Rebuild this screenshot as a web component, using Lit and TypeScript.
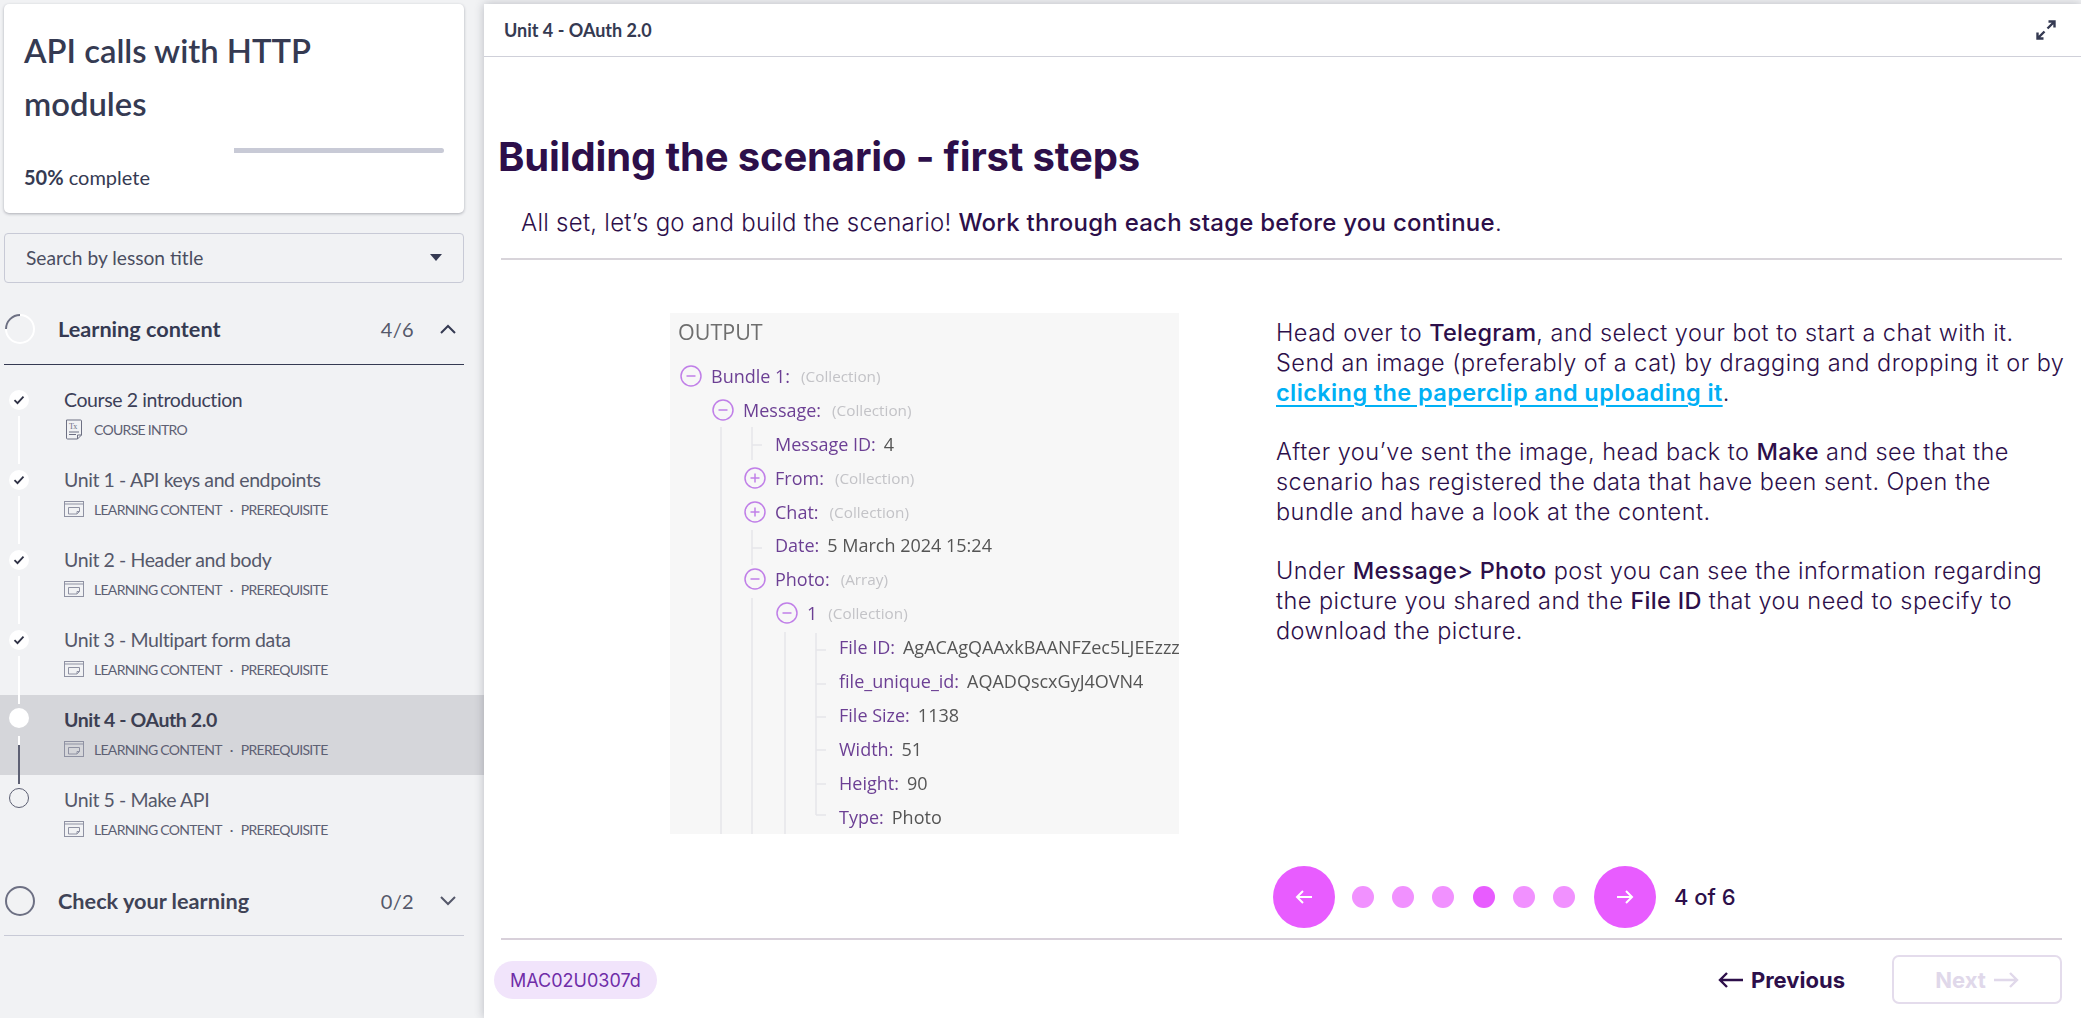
import { LitElement, css, html, svg } from 'lit';
import { customElement } from 'lit/decorators.js';

interface Lesson {
  title: string;
  meta: string[];
  state: 'done' | 'active' | 'todo';
  doc?: boolean;
}

interface TreeRow {
  depth: number;
  icon?: 'minus' | 'plus';
  label: string;
  type?: string;
  value?: string;
}

const lessons: Lesson[] = [
  { title: 'Course 2 introduction', meta: ['COURSE INTRO'], state: 'done', doc: true },
  { title: 'Unit 1 - API keys and endpoints', meta: ['LEARNING CONTENT', 'PREREQUISITE'], state: 'done' },
  { title: 'Unit 2 - Header and body', meta: ['LEARNING CONTENT', 'PREREQUISITE'], state: 'done' },
  { title: 'Unit 3 - Multipart form data', meta: ['LEARNING CONTENT', 'PREREQUISITE'], state: 'done' },
  { title: 'Unit 4 - OAuth 2.0', meta: ['LEARNING CONTENT', 'PREREQUISITE'], state: 'active' },
  { title: 'Unit 5 - Make API', meta: ['LEARNING CONTENT', 'PREREQUISITE'], state: 'todo' },
];

const tree: TreeRow[] = [
  { depth: 0, icon: 'minus', label: 'Bundle 1:', type: '(Collection)' },
  { depth: 1, icon: 'minus', label: 'Message:', type: '(Collection)' },
  { depth: 2, label: 'Message ID:', value: '4' },
  { depth: 2, icon: 'plus', label: 'From:', type: '(Collection)' },
  { depth: 2, icon: 'plus', label: 'Chat:', type: '(Collection)' },
  { depth: 2, label: 'Date:', value: '5 March 2024 15:24' },
  { depth: 2, icon: 'minus', label: 'Photo:', type: '(Array)' },
  { depth: 3, icon: 'minus', label: '1', type: '(Collection)' },
  { depth: 4, label: 'File ID:', value: 'AgACAgQAAxkBAANFZec5LJEEzzzz' },
  { depth: 4, label: 'file_unique_id:', value: 'AQADQscxGyJ4OVN4' },
  { depth: 4, label: 'File Size:', value: '1138' },
  { depth: 4, label: 'Width:', value: '51' },
  { depth: 4, label: 'Height:', value: '90' },
  { depth: 4, label: 'Type:', value: 'Photo' },
];

const slideIcon = html`<svg class="type-icon" width="20" height="16" viewBox="0 0 20 16" fill="none" stroke="#8f92a3" stroke-width="1">
  <rect x="0.5" y="0.5" width="19" height="15"/><path d="M0.5 3h19" />
  <path d="M4.5 6.5h11v4l-2.5 2.5h-8.5z"/><path d="M15.5 10.5h-2.5v2.5"/>
</svg>`;

const docIcon = html`<svg class="type-icon" width="20" height="21" viewBox="0 0 20 21" fill="none" stroke="#6d7083" stroke-width="1">
  <path d="M2.5 1h14a1 1 0 0 1 1 1v14l-4 4H3.5a1 1 0 0 1-1-1z"/><path d="M17.5 16h-4v4"/>
  <path d="M5 13h10M5 15.5h7"/>
  <text x="5" y="9.5" font-size="8" font-family="Liberation Serif, serif" fill="#6d7083" stroke="none">Tx</text>
</svg>`;

const check = html`<svg width="12" height="10" viewBox="0 0 12 10" fill="none" stroke="#2e3145" stroke-width="1.8"><path d="M1.5 5.2l3 3 6-6.6"/></svg>`;

@customElement('app-root')
export class AppRoot extends LitElement {
  static styles = css`
    :host {
      display: flex;
      height: 100vh;
      overflow: hidden;
      background: #f1f2f4;
      font-family: 'Lato', 'Noto Sans', sans-serif;
      color: #353a52;
    }

    /* sidebar */
    .side { width: 484px; flex: none; padding-top: 4px; }
    .card {
      margin: 0 20px 0 4px;
      height: 209px;
      box-sizing: border-box;
      padding: 20px 20px 0;
      background: #fff;
      border-radius: 5px;
      box-shadow: 0 1px 3px rgba(40, 44, 60, 0.35);
    }
    .card h2 { margin: 0; width: 330px; font-size: 32.8px; line-height: 53px; font-weight: 600; color: #353a52; }
    .bar { margin: 18px 0 0; height: 5px; display: flex; border-radius: 3px; overflow: hidden; }
    .bar i { flex: 1; background: #fff; }
    .bar b { flex: 1; background: #c8cad6; }
    .pct { margin-top: 11px; font-size: 20px; line-height: 26px; }
    .pct b { font-weight: 700; }
    .search {
      margin: 20px 20px 0 4px;
      height: 50px;
      box-sizing: border-box;
      padding: 0 21px 2px 21px;
      display: flex;
      align-items: center;
      justify-content: space-between;
      border: 1px solid #c8cad6;
      border-radius: 4px;
      font-size: 19.2px;
      color: #4a4d60;
    }
    .caret { width: 0; height: 0; border: 6px solid transparent; border-top: 7px solid #353a52; border-bottom: 0; }
    .section {
      margin: 0 20px 0 4px;
      height: 82px;
      padding-top: 11px;
      box-sizing: border-box;
      display: flex;
      align-items: center;
      border-bottom: 1px solid #353a52;
    }
    .section.closed { height: 81px; border-bottom-color: #c8cad6; }
    .section svg.ring { flex: none; margin: 0 23px 0 1px; }
    .section .name { flex: 1; font-size: 21.7px; font-weight: 700; color: #353a52; }
    .section.closed .name { color: #3f4356; }
    .section .count { font-size: 20px; letter-spacing: 0.3px; color: #55586a; margin-right: 26px; }
    .section svg.chev { flex: none; margin-right: 8px; }
    .lessons { padding-top: 10px; }
    .lesson { height: 80px; box-sizing: border-box; display: flex; padding: 15px 0 0 9px; }
    .lesson.active { background: #d5d6da; }
    .rail { width: 20px; margin-right: 35px; flex: none; }
    .node {
      width: 20px;
      height: 20px;
      box-sizing: border-box;
      border-radius: 50%;
      background: #fff;
      display: flex;
      align-items: center;
      justify-content: center;
    }
    .active .node { margin-top: -2px; }
    .todo .node { margin-top: -2px; background: transparent; border: 1px solid #5d6073; }
    .link { width: 2px; height: 48px; margin: 6px 0 0 9px; background: #fff; position: relative; z-index: 1; }
    .active .link { margin-top: 8px; background: linear-gradient(#fff 9px, #5d6073 9px); }
    .lesson .t { font-size: 19.5px; letter-spacing: -0.4px; line-height: 20px; color: #55586a; }
    .lesson.first .t { color: #3c4058; }
    .lesson.active .t { font-weight: 700; color: #3c3f52; }
    .lesson .m {
      margin-top: 9px;
      height: 20px;
      display: flex;
      align-items: center;
      font-size: 14px;
      letter-spacing: -0.7px;
      color: #5d6073;
    }
    .type-icon { flex: none; margin-right: 10px; }
    .m .dot { margin: 0 8px; }

    /* main */
    .main {
      flex: 1;
      min-width: 0;
      margin-top: 4px;
      background: #fff;
      display: flex;
      flex-direction: column;
      color: #2d0f4a;
      font-family: 'Inter', sans-serif;
      box-shadow: 0 0 9px rgba(40, 44, 60, 0.28);
      position: relative;
    }
    .top {
      height: 53px;
      flex: none;
      box-sizing: border-box;
      padding: 0 25px 0 20px;
      display: flex;
      align-items: center;
      justify-content: space-between;
      border-bottom: 1px solid #cfd0d9;
      font-family: 'Lato', sans-serif;
      font-size: 18px;
      font-weight: 700;
      color: #353a52;
    }
    .body { flex: 1; padding: 76px 19px 0 14px; display: flex; flex-direction: column; min-height: 0; }
    h1 { margin: 0; font-size: 40px; line-height: 48px; font-weight: 700; letter-spacing: -0.15px; color: #2d0f4a; }
    .intro {
      margin: 26px 0 0 3px;
      padding: 0 0 19px 20px;
      border-bottom: 2px solid #d8d4da;
      font-size: 24px;
      letter-spacing: 0.25px;
      line-height: 32px;
      font-weight: 300;
    }
    .intro b, .copy b { font-weight: 500; }
    .split { display: flex; margin-top: 53px; height: 521px; flex: none; }
    .shot {
      margin-left: 172px;
      width: 509px;
      height: 521px;
      flex: none;
      background: #f7f7f7;
      position: relative;
      overflow: hidden;
      font-family: 'Open Sans', sans-serif;
      filter: blur(0.45px);
    }
    .shot .h { padding: 5px 0 0 8px; font-size: 21.5px; line-height: 28px; color: #6e6e6e; }
    .rows { padding-top: 13px; }
    .row {
      height: 33.9px;
      display: flex;
      align-items: center;
      white-space: nowrap;
      font-size: 18px;
    }
    .row svg { flex: none; margin-right: 9px; }
    .row .l { color: #6c3f94; margin-right: 8px; }
    .row .ty { color: #c3c3c7; font-size: 15.3px; margin-left: 3px; }
    .row .v { color: #555; }
    .guides { position: absolute; left: 0; top: 0; }
    .copy { margin-left: 97px; width: 790px; flex: none; font-size: 23.5px; letter-spacing: 0.47px; line-height: 30px; font-weight: 300; margin-top: 5px; }
    .copy p { margin: 0 0 29px; }
    .copy b { letter-spacing: 0.3px; }
    .copy a { color: #00b0f5; font-weight: 600; letter-spacing: 0.4px; text-decoration: underline; text-underline-offset: 4px; }
    .pager { margin: 32px 0 0 775px; display: flex; align-items: center; height: 62px; flex: none; }
    .round {
      width: 62px;
      height: 62px;
      border-radius: 50%;
      background: #e85cff;
      display: flex;
      align-items: center;
      justify-content: center;
      flex: none;
    }
    .dots { display: flex; gap: 18.2px; margin: 0 19px 0 17px; }
    .dots i { width: 22px; height: 22px; border-radius: 50%; background: #f191ff; }
    .dots i.on { background: #e85cff; }
    .of { margin-left: 18px; font-size: 22px; font-weight: 500; }
    .foot {
      margin: 10px 0 0 3px;
      border-top: 2px solid #d8d0da;
      flex: none;
      padding-top: 15px;
      height: 80px;
      box-sizing: border-box;
      display: flex;
      align-items: flex-start;
    }
    .chip {
      margin: 6px 0 0 -7px;
      height: 38px;
      padding: 0 16px;
      border-radius: 19px;
      background: #f1e4fb;
      color: #6f2da8;
      font-size: 18px;
      display: flex;
      align-items: center;
    }
    .prev, .next {
      height: 49px;
      display: flex;
      align-items: center;
      gap: 8px;
      font-size: 22px;
      font-weight: 700;
    }
    .prev { margin-left: auto; margin-right: 47px; }
    .next {
      width: 170px;
      box-sizing: border-box;
      justify-content: center;
      border: 2px solid #e4dcec;
      border-radius: 7px;
      color: #e0d8ea;
    }
  `;

  private guides() {
    const segs = [
      'M51 114V521', 'M82 114V147M82 132H92', 'M82 217V252M82 235H92', 'M82 285V521',
      'M115 319V521', 'M146 320V502M146 337H156M146 371H156M146 404H156M146 437H156M146 471H156M146 502H156',
    ];
    return svg`<svg class="guides" width="509" height="521" fill="none" stroke="#e6e6ea" stroke-width="1.5">
      ${segs.map(d => svg`<path d=${d}/>`)}
    </svg>`;
  }

  private treeIcon(kind: 'minus' | 'plus') {
    return html`<svg width="22" height="22" viewBox="0 0 22 22" fill="none" stroke="#c07fe8" stroke-width="1.5">
      <circle cx="11" cy="11" r="10"/><path d="M6.5 11h9"/>${kind === 'plus' ? svg`<path d="M11 6.5v9"/>` : ''}
    </svg>`;
  }

  private renderLesson(l: Lesson, i: number) {
    const isLast = i === lessons.length - 1;
    return html`<div class="lesson ${l.state} ${i === 0 ? 'first' : ''}">
      <div class="rail">
        <div class="node">${l.state === 'done' ? check : ''}</div>
        ${isLast ? '' : html`<div class="link"></div>`}
      </div>
      <div class="info">
        <div class="t">${l.title}</div>
        <div class="m">
          ${l.doc ? docIcon : slideIcon}
          ${l.meta.map((m, j) => html`${j > 0 ? html`<span class="dot">·</span>` : ''}<span>${m}</span>`)}
        </div>
      </div>
    </div>`;
  }

  render() {
    return html`
      <aside class="side">
        <div class="card">
          <h2>API calls with HTTP modules</h2>
          <div class="bar"><i></i><b></b></div>
          <div class="pct"><b>50%</b> complete</div>
        </div>
        <div class="search"><span>Search by lesson title</span><span class="caret"></span></div>
        <div class="section">
          <svg class="ring" width="30" height="30" viewBox="0 0 30 30" fill="none" stroke-width="2">
            <circle cx="15" cy="15" r="14" stroke="#fff"/>
            <path d="M1 15A14 14 0 0 1 15 1" stroke="#6d7083"/>
          </svg>
          <span class="name">Learning content</span>
          <span class="count">4/6</span>
          <svg class="chev" width="16" height="10" viewBox="0 0 16 10" fill="none" stroke="#353a52" stroke-width="2"><path d="M1 9l7-7 7 7"/></svg>
        </div>
        <div class="lessons">${lessons.map((l, i) => this.renderLesson(l, i))}</div>
        <div class="section closed">
          <svg class="ring" width="30" height="30" viewBox="0 0 30 30" fill="none" stroke="#6d7083" stroke-width="2"><circle cx="15" cy="15" r="14"/></svg>
          <span class="name">Check your learning</span>
          <span class="count">0/2</span>
          <svg class="chev" width="16" height="10" viewBox="0 0 16 10" fill="none" stroke="#55586a" stroke-width="2"><path d="M1 1l7 7 7-7"/></svg>
        </div>
      </aside>
      <main class="main">
        <div class="top">
          <span>Unit 4 - OAuth 2.0</span>
          <svg width="20" height="20" viewBox="0 0 20 20" fill="none" stroke="#353a52" stroke-width="2.4">
            <path d="M11.5 8.5L18 2M12.5 1.5h6v6M8.5 11.5L2 18M1.5 12.5v6h6"/>
          </svg>
        </div>
        <div class="body">
          <h1>Building the scenario - first steps</h1>
          <div class="intro">All set, let’s go and build the scenario! <b>Work through each stage before you continue</b>.</div>
          <div class="split">
            <div class="shot">
              <div class="h">OUTPUT</div>
              <div class="rows">
                ${tree.map(r => html`<div class="row" style="padding-left:${(r.icon ? 10 : 41) + r.depth * 32}px">
                  ${r.icon ? this.treeIcon(r.icon) : ''}
                  <span class="l">${r.label}</span>
                  ${r.type ? html`<span class="ty">${r.type}</span>` : ''}
                  ${r.value ? html`<span class="v">${r.value}</span>` : ''}
                </div>`)}
              </div>
              ${this.guides()}
            </div>
            <div class="copy">
              <p>Head over to <b>Telegram</b>, and select your bot to start a chat with it. Send an image (preferably of a cat) by dragging and dropping it or by <a href="#">clicking the paperclip and uploading it</a>.</p>
              <p>After you’ve sent the image, head back to <b>Make</b> and see that the scenario has registered the data that have been sent. Open the bundle and have a look at the content.</p>
              <p>Under <b>Message&gt; Photo</b> post you can see the information regarding the picture you shared and the <b>File ID</b> that you need to specify to download the picture.</p>
            </div>
          </div>
          <div class="pager">
            <div class="round"><svg width="18" height="16" viewBox="0 0 18 16" fill="none" stroke="#fff" stroke-width="2"><path d="M17 8H2M8 2L2 8l6 6"/></svg></div>
            <div class="dots">${[0, 1, 2, 3, 4, 5].map(i => html`<i class=${i === 3 ? 'on' : ''}></i>`)}</div>
            <div class="round"><svg width="18" height="16" viewBox="0 0 18 16" fill="none" stroke="#fff" stroke-width="2"><path d="M1 8h15M10 2l6 6-6 6"/></svg></div>
            <span class="of">4 of 6</span>
          </div>
          <div class="foot">
            <span class="chip">MAC02U0307d</span>
            <span class="prev"><svg width="25" height="18" viewBox="0 0 25 18" fill="none" stroke="#2d0f4a" stroke-width="2.4"><path d="M25 9H2M9 2L2 9l7 7"/></svg>Previous</span>
            <span class="next">Next<svg width="25" height="18" viewBox="0 0 25 18" fill="none" stroke="#e0d8ea" stroke-width="2.4"><path d="M0 9h23M16 2l7 7-7 7"/></svg></span>
          </div>
        </div>
      </main>
    `;
  }
}
